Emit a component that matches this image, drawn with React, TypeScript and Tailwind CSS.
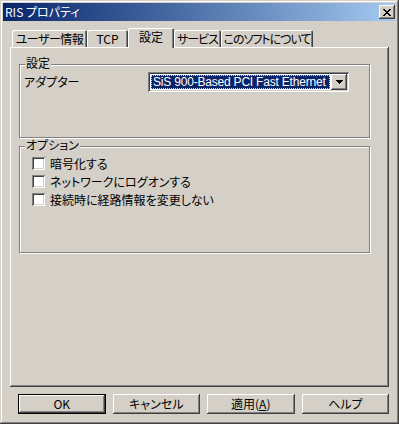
import React from 'react';

const raised =
  'shadow-[inset_-1px_-1px_#404040,inset_1px_1px_#ffffff,inset_-2px_-2px_#808080,inset_2px_2px_#d4d0c8]';
const sunken =
  'shadow-[inset_1px_1px_#808080,inset_-1px_-1px_#ffffff,inset_2px_2px_#404040,inset_-2px_-2px_#d4d0c8]';
const etched = 'border border-[#808080] shadow-[inset_1px_1px_#ffffff,1px_1px_#ffffff]';

const tabs = [
  { label: 'ユーザー情報', w: 'w-[75px]', t: 'tracking-[-0.5px]' },
  { label: 'TCP', w: 'w-[41px]', t: '' },
  { label: '設定', w: 'w-[46px]', t: '', active: true },
  { label: 'サービス', w: 'w-[47px]', t: 'tracking-[-1px]' },
  { label: 'このソフトについて', w: 'w-[92px]', t: 'tracking-[-1px]' },
];

const options = ['暗号化する', 'ネットワークにログオンする', '接続時に経路情報を変更しない'];

function CloseGlyph() {
  const px: [number, number, number][] = [
    [0, 0, 2], [6, 0, 2],
    [1, 1, 2], [5, 1, 2],
    [2, 2, 4],
    [3, 3, 2],
    [2, 4, 4],
    [1, 5, 2], [5, 5, 2],
    [0, 6, 2], [6, 6, 2],
  ];
  return (
    <svg width="8" height="7" viewBox="0 0 8 7" shapeRendering="crispEdges">
      {px.map(([x, y, w], i) => (
        <rect key={i} x={x} y={y} width={w} height={1} fill="#000" />
      ))}
    </svg>
  );
}

function Arrow() {
  return (
    <svg width="7" height="4" viewBox="0 0 7 4" shapeRendering="crispEdges">
      <rect x="0" y="0" width="7" height="1" fill="#000" />
      <rect x="1" y="1" width="5" height="1" fill="#000" />
      <rect x="2" y="2" width="3" height="1" fill="#000" />
      <rect x="3" y="3" width="1" height="1" fill="#000" />
    </svg>
  );
}

function Group({ title, className, children }: { title: string; className: string; children?: React.ReactNode }) {
  return (
    <div className={`relative w-[351px] ${etched} ${className}`}>
      <span className="absolute -top-[8px] left-[5px] px-[1px] bg-[#d4d0c8] leading-[12px]">{title}</span>
      {children}
    </div>
  );
}

export default function App() {
  return (
    <div
      lang="ja"
      className="w-[399px] h-[424px] bg-[#d4d0c8] p-[3px] flex flex-col text-[12px] leading-[12px] text-black whitespace-nowrap font-['Noto_Sans_CJK_JP',sans-serif] [font-feature-settings:'palt'] shadow-[inset_-1px_-1px_#404040,inset_1px_1px_#d4d0c8,inset_-2px_-2px_#808080,inset_2px_2px_#ffffff]"
    >
      {/* title bar */}
      <div className="h-[18px] flex items-center justify-between bg-gradient-to-r from-[#0a246a] to-[#a6caf0] pl-[2px] pr-[1px]">
        <span className="text-white">RIS プロパティ</span>
        <button className={`w-[16px] h-[14px] bg-[#d4d0c8] flex items-center justify-center ${raised}`}>
          <CloseGlyph />
        </button>
      </div>

      <div className="px-[7px] flex flex-col">
        {/* tabs */}
        <div className="mt-[7px] h-[19px] pl-[2px] flex items-end">
          {tabs.map((t) =>
            t.active ? (
              <div
                key={t.label}
                className={`${t.w} h-[20px] -mb-[1px] relative z-10 bg-[#d4d0c8] rounded-t-[2px] flex items-center justify-center pb-[2px] shadow-[inset_1px_1px_#ffffff,inset_-1px_0_#404040,inset_-2px_0_#808080]`}
              >
                {t.label}
              </div>
            ) : (
              <div
                key={t.label}
                className={`${t.w} ${t.t} h-[17px] bg-[#d4d0c8] rounded-t-[2px] flex items-center justify-center pt-[1px] shadow-[inset_1px_1px_#ffffff,inset_-1px_0_#404040,inset_-2px_0_#808080]`}
              >
                {t.label}
              </div>
            )
          )}
        </div>

        {/* panel */}
        <div className={`h-[340px] w-[379px] pl-[9px] pt-[17px] flex flex-col ${raised}`}>
          <Group title="設定" className="h-[74px]">
            <div className="mt-[7px] flex items-center h-[20px]">
              <span className="ml-[4px]">アダプター</span>
              <div className={`ml-auto mr-[20px] w-[201px] h-[20px] bg-white p-[2px] flex ${sunken}`}>
                <div className="flex-1 min-w-0 p-[1px]">
                  <div className="h-full overflow-hidden bg-[#0a246a] text-white border border-dotted border-[#e8d48c] flex items-center pl-[1px] font-['Liberation_Sans',sans-serif] tracking-[-0.2px]">
                    SiS 900-Based PCI Fast Ethernet
                  </div>
                </div>
                <div className={`w-[16px] h-[16px] bg-[#d4d0c8] flex items-center justify-center ${raised}`}>
                  <Arrow />
                </div>
              </div>
            </div>
          </Group>

          <Group title="オプション" className="h-[107px] mt-[8px]">
            <div className="pt-[10px] pl-[12px] flex flex-col gap-[5px]">
              {options.map((o) => (
                <label key={o} className="flex items-center gap-[5px] h-[13px]">
                  <span className={`w-[13px] h-[13px] bg-white ${sunken}`} />
                  <span>{o}</span>
                </label>
              ))}
            </div>
          </Group>
        </div>

        {/* buttons */}
        <div className="mt-[7px] pl-[8px] flex gap-[7px]">
          <button className="w-[88px] h-[20px] border border-black">
            <div className={`w-full h-full flex items-center justify-center ${raised}`}>OK</div>
          </button>
          <button className={`w-[88px] h-[20px] flex items-center justify-center ${raised}`}>キャンセル</button>
          <button className={`w-[88px] h-[20px] flex items-center justify-center ${raised}`}>
            適用(<span className="underline">A</span>)
          </button>
          <button className={`w-[88px] h-[20px] flex items-center justify-center ${raised}`}>ヘルプ</button>
        </div>
      </div>
    </div>
  );
}
